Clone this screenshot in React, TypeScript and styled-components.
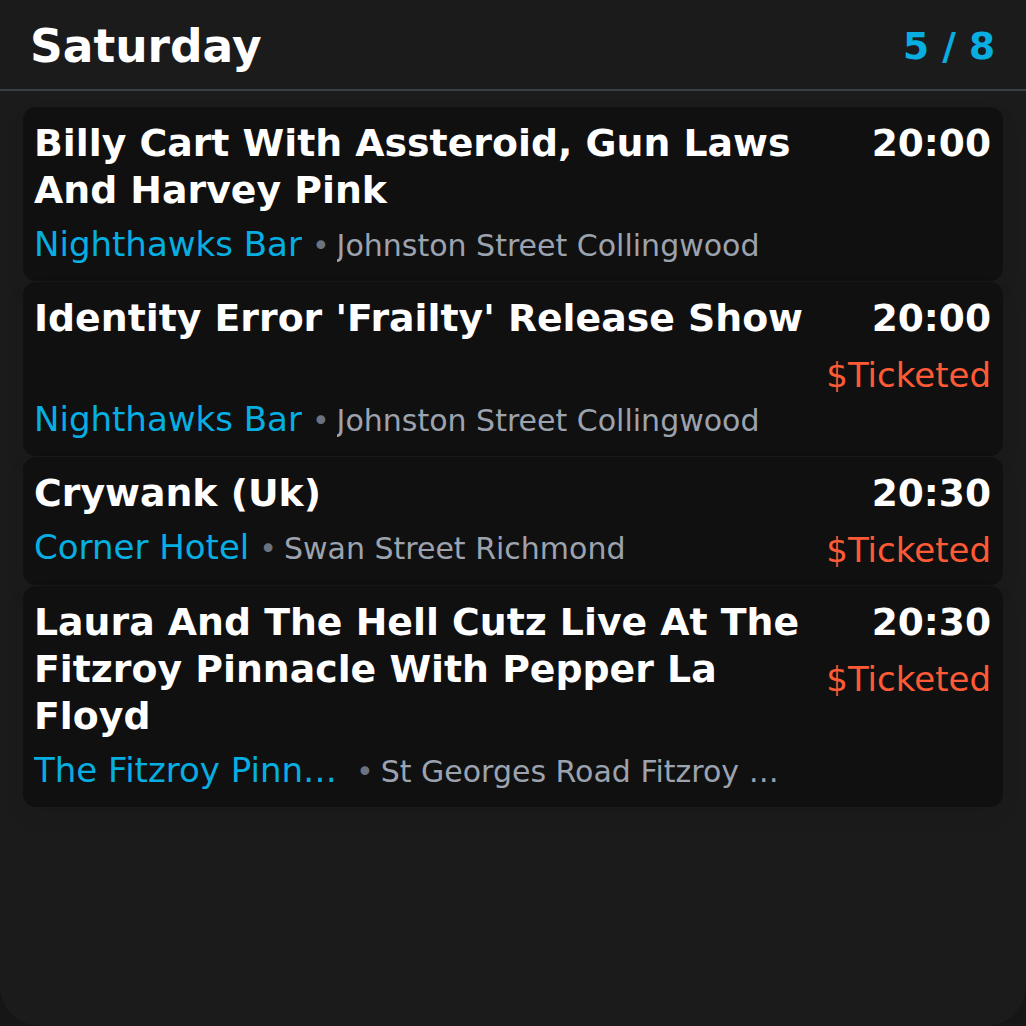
import React from "react";
import styled, { createGlobalStyle } from "styled-components";

const GlobalStyle = createGlobalStyle`
  html, body {
    margin: 0;
    padding: 0;
    background: #161616;
  }
  body {
    font-family: "DejaVu Sans", "Liberation Sans", sans-serif;
    -webkit-font-smoothing: antialiased;
  }
  * { box-sizing: border-box; }
`;

const Panel = styled.div`
  width: 1026px;
  height: 1026px;
  background: #1b1b1b;
  border-radius: 0 0 40px 40px;
  overflow: hidden;
  display: flex;
  flex-direction: column;
`;

const Header = styled.header`
  height: 91px;
  padding: 0 31px 0 30px;
  display: flex;
  align-items: center;
  justify-content: space-between;
  border-bottom: 2px solid #393e48;
`;

const DayTitle = styled.h1`
  margin: 0;
  font-size: 45.5px;
  font-weight: 700;
  color: #ffffff;
  line-height: 1;
  padding-top: 4px;
`;

const Counter = styled.span`
  font-size: 37.5px;
  font-weight: 700;
  color: #08aee2;
  line-height: 1;
  padding-top: 4px;
`;

const List = styled.div`
  padding: 16px 23px 0;
  display: flex;
  flex-direction: column;
  gap: 1px;
`;

const Card = styled.article`
  background: #101010;
  border-radius: 13px;
  padding: 13px 12px 11px 11px;
  display: flex;
  gap: 20px;
  box-shadow: 0 10px 22px rgba(0, 0, 0, 0.06);
`;

const Main = styled.div`
  flex: 1;
  min-width: 0;
  display: flex;
  flex-direction: column;
`;

const Title = styled.h2<{ $minLines: number }>`
  margin: 0;
  font-size: 37.8px;
  line-height: 47px;
  font-weight: 700;
  color: #ffffff;
  min-height: ${(p) => p.$minLines * 47}px;
`;

const VenueRow = styled.div`
  margin-top: 6px;
  padding-right: 16px;
  display: flex;
  align-items: baseline;
  white-space: nowrap;
  overflow: hidden;
  line-height: 48px;
`;

const Venue = styled.span`
  font-size: 34px;
  color: #06aee2;
  max-width: 312px;
  overflow: hidden;
  text-overflow: ellipsis;
  flex-shrink: 0;
`;

const Dot = styled.span`
  font-size: 30px;
  color: #6b7280;
  margin: 0 7px 0 10px;
  flex-shrink: 0;
`;

const Address = styled.span`
  font-size: 30px;
  color: #9ca3af;
  overflow: hidden;
  text-overflow: ellipsis;
  min-width: 0;
`;

const Side = styled.div`
  display: flex;
  flex-direction: column;
  align-items: flex-end;
  flex-shrink: 0;
`;

const Time = styled.span`
  font-size: 37.5px;
  line-height: 47px;
  font-weight: 700;
  color: #ffffff;
`;

const Price = styled.span`
  margin-top: 9px;
  font-size: 34px;
  line-height: 48px;
  color: #ff5a36;
`;

type Gig = {
  title: string;
  minLines: number;
  venue: string;
  address: string;
  time: string;
  ticketed: boolean;
};

const gigs: Gig[] = [
  {
    title: "Billy Cart With Assteroid, Gun Laws And Harvey Pink",
    minLines: 1,
    venue: "Nighthawks Bar",
    address: "Johnston Street Collingwood",
    time: "20:00",
    ticketed: false,
  },
  {
    title: "Identity Error 'Frailty' Release Show",
    minLines: 2,
    venue: "Nighthawks Bar",
    address: "Johnston Street Collingwood",
    time: "20:00",
    ticketed: true,
  },
  {
    title: "Crywank (Uk)",
    minLines: 1,
    venue: "Corner Hotel",
    address: "Swan Street Richmond",
    time: "20:30",
    ticketed: true,
  },
  {
    title:
      "Laura And The Hell Cutz Live At The Fitzroy Pinnacle With Pepper La Floyd",
    minLines: 1,
    venue: "The Fitzroy Pinnacle",
    address: "St Georges Road Fitzroy North",
    time: "20:30",
    ticketed: true,
  },
];

export default function App() {
  return (
    <>
      <GlobalStyle />
      <Panel>
        <Header>
          <DayTitle>Saturday</DayTitle>
          <Counter>5 / 8</Counter>
        </Header>
        <List>
          {gigs.map((g, i) => (
            <Card key={i}>
              <Main>
                <Title $minLines={g.minLines}>{g.title}</Title>
                <VenueRow>
                  <Venue>{g.venue}</Venue>
                  <Dot>•</Dot>
                  <Address>{g.address}</Address>
                </VenueRow>
              </Main>
              <Side>
                <Time>{g.time}</Time>
                {g.ticketed && <Price>$Ticketed</Price>}
              </Side>
            </Card>
          ))}
        </List>
      </Panel>
    </>
  );
}
